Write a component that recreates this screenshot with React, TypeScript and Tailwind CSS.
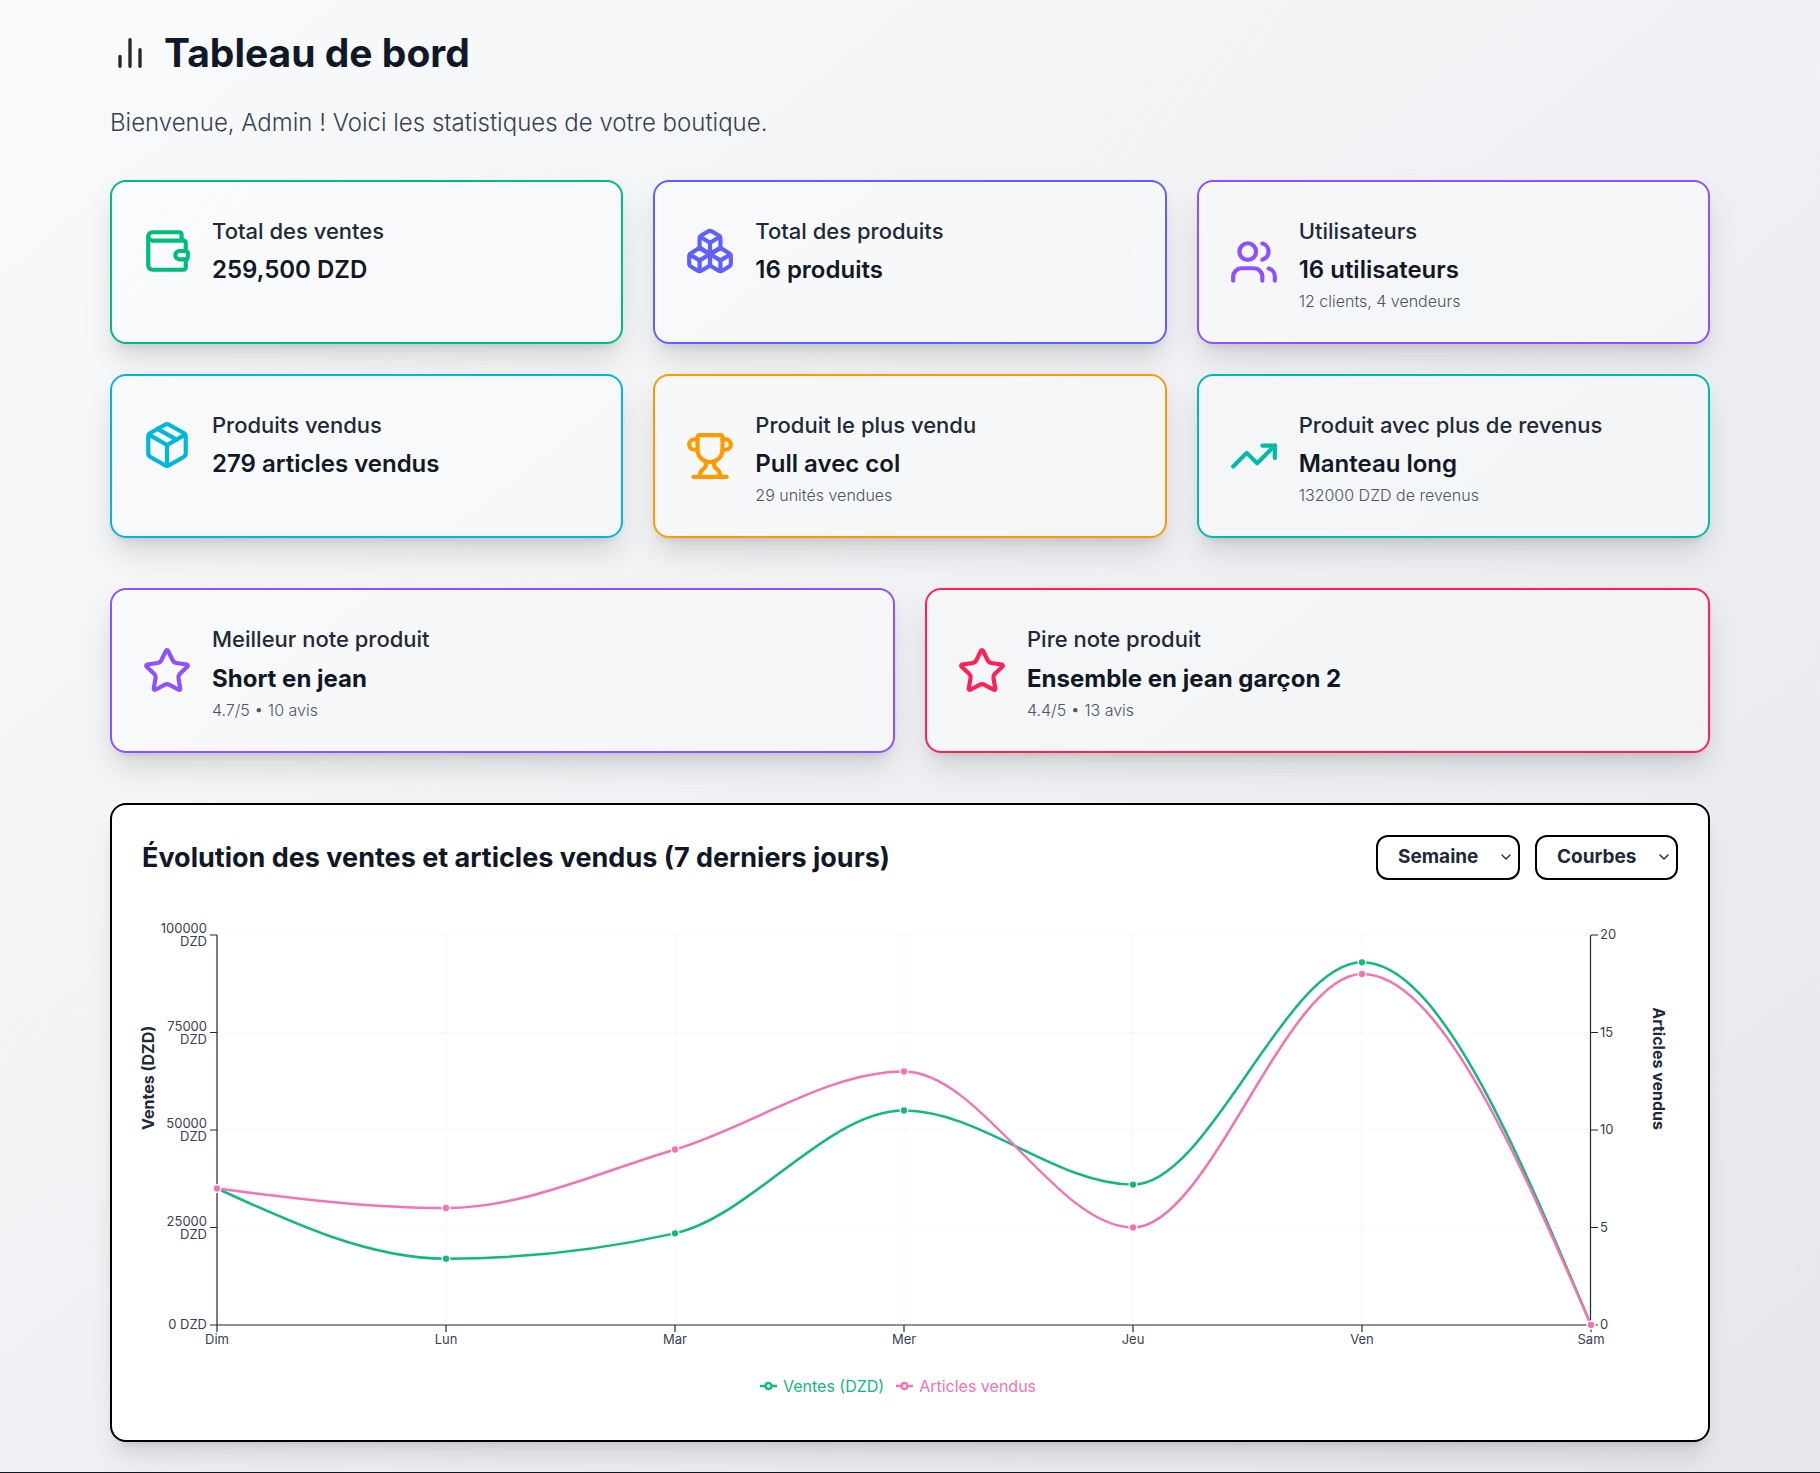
import type { ReactNode } from "react";
import { Boxes, ChevronDown, Package, Star, TrendingUp, Trophy, Users, Wallet } from "lucide-react";

type Stat = {
  title: string;
  value: string;
  note?: string;
  icon: ReactNode;
  border: string;
};

const ICON = "size-[50px] shrink-0";

const stats: Stat[] = [
  { title: "Total des ventes", value: "259,500 DZD", icon: <Wallet className={`${ICON} text-emerald-500`} />, border: "border-emerald-500" },
  { title: "Total des produits", value: "16 produits", icon: <Boxes className={`${ICON} text-indigo-500`} />, border: "border-indigo-500" },
  { title: "Utilisateurs", value: "16 utilisateurs", note: "12 clients, 4 vendeurs", icon: <Users className={`${ICON} text-violet-500`} />, border: "border-violet-500" },
  { title: "Produits vendus", value: "279 articles vendus", icon: <Package className={`${ICON} text-cyan-500`} />, border: "border-cyan-500" },
  { title: "Produit le plus vendu", value: "Pull avec col", note: "29 unités vendues", icon: <Trophy className={`${ICON} text-amber-500`} />, border: "border-amber-500" },
  { title: "Produit avec plus de revenus", value: "Manteau long", note: "132000 DZD de revenus", icon: <TrendingUp className={`${ICON} text-teal-500`} />, border: "border-teal-500" },
];

const ratings: Stat[] = [
  { title: "Meilleur note produit", value: "Short en jean", note: "4.7/5 • 10 avis", icon: <Star className={`${ICON} text-violet-500`} />, border: "border-violet-500" },
  { title: "Pire note produit", value: "Ensemble en jean garçon 2", note: "4.4/5 • 13 avis", icon: <Star className={`${ICON} text-rose-500`} />, border: "border-rose-500" },
];

function StatCard({ stat, strong = false }: { stat: Stat; strong?: boolean }) {
  return (
    <article
      className={`flex items-start rounded-2xl border-2 bg-white/40 p-[30px] shadow-[0_16px_30px_-4px_rgba(0,0,0,0.14),0_8px_10px_-6px_rgba(0,0,0,0.1)] ${stat.border}`}
    >
      <div className="flex items-center gap-5">
        {stat.icon}
        <div>
          <h2 className="text-[22px] leading-[38px] font-medium text-gray-800">{stat.title}</h2>
          <p
            className={
              strong
                ? "text-2xl leading-[41px] font-bold text-gray-900"
                : "text-2xl leading-[40px] font-semibold text-gray-900"
            }
          >
            {stat.value}
          </p>
          {stat.note && <p className="text-base leading-[22px] font-light text-gray-600">{stat.note}</p>}
        </div>
      </div>
    </article>
  );
}

function SelectBox({ label, options }: { label: string; options: string[] }) {
  return (
    <div className="relative">
      <select
        aria-label={label}
        className="h-[45px] appearance-none rounded-xl border-2 border-black bg-white pr-[39px] pl-5 text-[19px] font-bold text-gray-800"
      >
        {options.map((option) => (
          <option key={option}>{option}</option>
        ))}
      </select>
      <ChevronDown className="pointer-events-none absolute top-3.5 right-1.5 size-4 text-gray-800" />
    </div>
  );
}

const GREEN = "#10b981";
const PINK = "#f472b6";
const DAYS = ["Dim", "Lun", "Mar", "Mer", "Jeu", "Ven", "Sam"];
const SALES = [35000, 17000, 23500, 55000, 36000, 93000, 0];
const ITEMS = [7, 6, 9, 13, 5, 18, 0];

const LEFT = 75;
const RIGHT = 1449;
const TOP = 25;
const BOTTOM = 415;
const FRACTIONS = [0, 0.25, 0.5, 0.75, 1];

const xAt = (i: number) => LEFT + (i * (RIGHT - LEFT)) / (DAYS.length - 1);
const yAt = (fraction: number) => BOTTOM - fraction * (BOTTOM - TOP);

type Point = [number, number];

const toPoints = (values: number[], max: number): Point[] => values.map((v, i) => [xAt(i), yAt(v / max)]);

/* Monotone cubic interpolation in x. */
function monotonePath(points: Point[]) {
  const n = points.length;
  const slopes = points.slice(1).map((p, i) => (p[1] - points[i][1]) / (p[0] - points[i][0]));
  const tangents = points.map((_, i) => {
    if (i === 0 || i === n - 1) return 0;
    const a = slopes[i - 1];
    const b = slopes[i];
    if (a * b <= 0) return 0;
    return 2 * Math.sign(a) * Math.min(Math.abs(a), Math.abs(b), Math.abs(a + b) / 4);
  });
  tangents[0] = (3 * slopes[0] - tangents[1]) / 2;
  tangents[n - 1] = (3 * slopes[n - 2] - tangents[n - 2]) / 2;
  let d = `M${points[0][0]},${points[0][1]}`;
  for (let i = 0; i < n - 1; i++) {
    const [x0, y0] = points[i];
    const [x1, y1] = points[i + 1];
    const h = (x1 - x0) / 3;
    d += `C${x0 + h},${y0 + h * tangents[i]} ${x1 - h},${y1 - h * tangents[i + 1]} ${x1},${y1}`;
  }
  return d;
}

function Series({ points, color }: { points: Point[]; color: string }) {
  return (
    <g>
      <path d={monotonePath(points)} fill="none" stroke={color} strokeWidth={2.5} />
      {points.map(([x, y]) => (
        <circle key={x} cx={x} cy={y} r={3.8} fill={color} stroke="#fff" strokeWidth={1.3} />
      ))}
    </g>
  );
}

function SalesChart() {
  return (
    <svg
      viewBox="0 0 1536 464"
      className="h-auto w-full overflow-visible"
      role="img"
      aria-label="Évolution des ventes et articles vendus"
    >
      <g stroke="#f3f4f6" strokeWidth={1.2} strokeDasharray="4 4">
        {FRACTIONS.map((f) => (
          <line key={f} x1={LEFT} x2={RIGHT} y1={yAt(f)} y2={yAt(f)} />
        ))}
        {DAYS.map((day, i) => (
          <line key={day} x1={xAt(i)} x2={xAt(i)} y1={TOP} y2={BOTTOM} />
        ))}
      </g>
      <g stroke="#1f2937" strokeWidth={1.2}>
        <line x1={LEFT} x2={LEFT} y1={TOP} y2={BOTTOM} />
        <line x1={LEFT} x2={RIGHT} y1={BOTTOM} y2={BOTTOM} />
        <line x1={RIGHT - 0.5} x2={RIGHT - 0.5} y1={TOP} y2={BOTTOM} />
        {FRACTIONS.map((f) => (
          <path key={f} d={`M${LEFT - 7},${yAt(f)}H${LEFT}M${RIGHT},${yAt(f)}h7`} />
        ))}
        {DAYS.map((day, i) => (
          <line key={day} x1={xAt(i)} x2={xAt(i)} y1={BOTTOM} y2={BOTTOM + 7} />
        ))}
      </g>
      <g className="text-[13px]" fill="#374151">
        <text x={65} y={yAt(0) + 4} textAnchor="end">0 DZD</text>
        {[25000, 50000, 75000, 100000].map((value) => (
          <text key={value} textAnchor="end">
            <tspan x={65} y={yAt(value / 100000) - 2}>{value}</tspan>
            <tspan x={65} dy={13}>DZD</tspan>
          </text>
        ))}
        {FRACTIONS.map((f) => (
          <text key={f} x={1458} y={yAt(f) + 4}>{f * 20}</text>
        ))}
        {DAYS.map((day, i) => (
          <text key={day} x={xAt(i)} y={BOTTOM + 19} textAnchor="middle">{day}</text>
        ))}
      </g>
      <g className="text-base font-bold" fill="#1f2937">
        <text transform="translate(12 220) rotate(-90)">Ventes (DZD)</text>
        <text transform="translate(1511 220) rotate(90)" textAnchor="end">Articles vendus</text>
      </g>
      <Series points={toPoints(SALES, 100000)} color={GREEN} />
      <Series points={toPoints(ITEMS, 20)} color={PINK} />
    </svg>
  );
}

function LegendItem({ color, children }: { color: string; children: ReactNode }) {
  return (
    <li className="flex items-center gap-1.5" style={{ color }}>
      <svg viewBox="0 0 17 10" className="h-2.5 w-[17px]" fill="none" stroke="currentColor" strokeWidth={2.4}>
        <path d="M0 5h5.5M11.5 5H17" />
        <circle cx={8.5} cy={5} r={3} />
      </svg>
      {children}
    </li>
  );
}

function BarsIcon() {
  return (
    <svg
      viewBox="0 0 24 24"
      className="size-10 shrink-0 text-neutral-800"
      fill="none"
      stroke="currentColor"
      strokeWidth={2}
      strokeLinecap="round"
      aria-hidden="true"
    >
      <path d="M18 20V10M12 20V4M6 20v-6" />
    </svg>
  );
}

export default function App() {
  return (
    <div className="border-b border-gray-900 bg-linear-to-br from-gray-50 to-gray-200 font-['Inter',sans-serif]">
      <main className="mx-auto max-w-[1640px] px-5 py-[30px]">
        <header>
          <h1 className="flex h-[46px] items-center gap-3.5 text-[39px] leading-[44px] font-bold text-gray-900">
            <BarsIcon />
            Tableau de bord
          </h1>
          <p className="mt-[31px] text-2xl leading-8 font-light text-gray-700">
            Bienvenue, Admin ! Voici les statistiques de votre boutique.
          </p>
        </header>

        <section className="mt-[41px] grid grid-cols-3 gap-[30px]">
          {stats.map((stat) => (
            <StatCard key={stat.title} stat={stat} />
          ))}
        </section>

        <section className="mt-[50px] grid grid-cols-2 gap-[30px]">
          {ratings.map((stat) => (
            <StatCard key={stat.title} stat={stat} strong />
          ))}
        </section>

        <section className="mt-[50px] rounded-2xl border-2 border-black bg-white p-[30px] shadow-xl">
          <div className="flex items-center justify-between">
            <h2 className="text-[27px] leading-[45px] font-bold text-gray-900">
              Évolution des ventes et articles vendus (7 derniers jours)
            </h2>
            <div className="flex gap-[15px]">
              <SelectBox label="Période" options={["Semaine", "Mois", "Année"]} />
              <SelectBox label="Type de graphique" options={["Courbes", "Barres"]} />
            </div>
          </div>
          <div className="mt-[30px]">
            <SalesChart />
            <ul className="flex justify-center gap-3 pr-6 pb-3 text-base leading-6">
              <LegendItem color={GREEN}>Ventes (DZD)</LegendItem>
              <LegendItem color={PINK}>Articles vendus</LegendItem>
            </ul>
          </div>
        </section>
      </main>
    </div>
  );
}
